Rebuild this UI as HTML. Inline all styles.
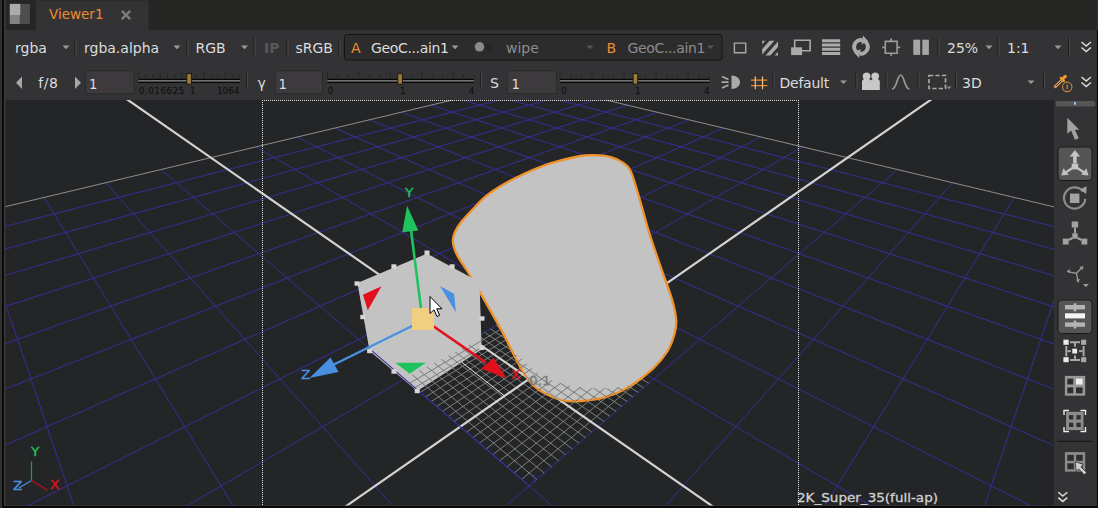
<!DOCTYPE html>
<html><head><meta charset="utf-8"><title>Viewer1</title>
<style>
html,body{margin:0;padding:0;background:#0a0a0a;}
body{width:1098px;height:508px;position:relative;overflow:hidden;font-family:"DejaVu Sans","Liberation Sans",sans-serif;}
#t span{position:absolute;white-space:pre;line-height:1;}
</style></head><body>
<svg width="1098" height="508" viewBox="0 0 1098 508" style="position:absolute;left:0;top:0">
<defs>
<clipPath id="vp"><rect x="5.5" y="100" width="1048.5" height="405.5"/></clipPath>
<clipPath id="cyl"><path d="M452.8 241.0C452.8 238.1 453.3 235.5 454.8 232.2C456.3 228.9 458.6 225.2 461.7 221.3C464.8 217.4 469.6 212.6 473.5 208.5C477.4 204.4 481.0 200.3 485.3 196.7C489.6 193.1 492.9 190.6 499.1 186.9C505.3 183.2 514.2 178.4 522.7 174.5C531.2 170.6 541.1 166.4 550.3 163.4C559.5 160.4 570.5 157.9 577.9 156.5C585.2 155.1 588.9 155.1 594.4 155.2C599.9 155.3 606.3 155.9 610.9 157.1C615.5 158.2 618.8 159.9 622.0 162.1C625.2 164.3 627.5 164.8 630.2 170.3C633.0 175.8 635.3 184.5 638.5 195.1C641.7 205.7 645.7 221.4 649.5 233.7C653.3 246.0 657.7 258.1 661.4 268.9C665.1 279.7 669.2 290.0 671.7 298.4C674.2 306.8 675.6 313.1 676.1 319.0C676.6 324.9 676.1 328.4 674.6 333.8C673.1 339.2 671.0 345.6 667.3 351.5C663.6 357.4 658.9 363.3 652.5 369.2C646.1 375.1 636.8 382.2 628.9 386.9C621.0 391.6 613.2 394.8 605.3 397.2C597.4 399.6 588.8 400.4 581.7 401.0C574.7 401.6 569.1 401.8 563.0 400.5C556.9 399.2 549.9 395.9 545.0 393.5C540.1 391.1 537.1 389.2 533.6 385.8C530.1 382.4 527.1 378.4 523.9 373.4C520.7 368.3 517.8 362.2 514.3 355.5C510.8 348.8 507.1 340.8 503.2 333.4C499.3 326.0 494.7 318.3 490.8 311.4C486.9 304.5 483.8 299.0 479.8 292.1C475.8 285.2 470.0 275.4 466.6 270.0C463.2 264.6 461.7 263.1 459.7 259.7C457.7 256.3 455.9 253.0 454.8 249.9C453.7 246.8 452.8 243.9 452.8 241.0Z"/></clipPath>
<clipPath id="band"><path d="M518.0 355.0C521.0 357.8 530.5 367.8 536.0 372.0C541.5 376.2 544.4 377.6 551.0 380.0C557.6 382.4 566.0 385.3 575.6 386.7C585.2 388.1 598.8 388.8 608.4 388.4C618.0 388.0 626.2 386.5 633.0 384.3C639.8 382.1 644.1 379.1 649.3 375.0C654.5 370.9 661.5 362.5 664.0 360.0L690 360L690 420L500 420L500 355Z"/></clipPath>
<clipPath id="cubeu"><path d="M405.5 377.5L481.7 338.6L481.7 349.5L417.2 391.0Z"/></clipPath>
<clipPath id="stripe"><rect x="762.200" y="40.800" width="15.800" height="14.600"/></clipPath>
</defs>

<rect x="0" y="0" width="1098" height="508" fill="#0a0a0a"/>
<rect x="0" y="0" width="2" height="508" fill="#303030"/>
<rect x="4" y="0" width="1092.7" height="506" fill="#3a3a3a"/>
<rect x="5.5" y="0" width="1091.2" height="30.3" fill="#262624"/>
<rect x="1096.700" y="0" width="1.300" height="30" fill="#2e2e2e"/>
<rect x="36" y="0.5" width="112.5" height="30" fill="#333335"/>
<rect x="5.5" y="30.3" width="1091.2" height="70" fill="#333335"/>
<!-- viewer icon -->
<rect x="9.8" y="3.9" width="20.1" height="20.1" fill="#4e4e4e"/>
<rect x="9.8" y="3.9" width="10.5" height="11.1" fill="#acacac"/>
<rect x="9.8" y="15" width="10" height="9" fill="#828282"/>
<!-- tab close -->
<path d="M121.800 10.800l8.400 8.400m0-8.400l-8.400 8.400" stroke="#7a7a7a" stroke-width="2.600"/>
<!-- row1 -->
<path d="M62.5 45.6h7l-3.5 3.6z" fill="#9a9a9a"/><path d="M75 38V56" stroke="#1c1c1c" stroke-width="1"/><path d="M76 38V56" stroke="#4a4a4a" stroke-width="1"/><path d="M173.5 45.6h7l-3.5 3.6z" fill="#9a9a9a"/><path d="M187 38V56" stroke="#1c1c1c" stroke-width="1"/><path d="M188 38V56" stroke="#4a4a4a" stroke-width="1"/><path d="M241 45.6h7l-3.5 3.6z" fill="#9a9a9a"/><path d="M254 38V56" stroke="#1c1c1c" stroke-width="1"/><path d="M255 38V56" stroke="#4a4a4a" stroke-width="1"/><path d="M287 38V56" stroke="#1c1c1c" stroke-width="1"/><path d="M288 38V56" stroke="#4a4a4a" stroke-width="1"/><path d="M339 38V56" stroke="#1c1c1c" stroke-width="1"/><path d="M340 38V56" stroke="#4a4a4a" stroke-width="1"/>
<rect x="344.5" y="34.5" width="377.5" height="25.5" rx="2" fill="#2c2c2c" stroke="#141414" stroke-width="1"/>
<path d="M451.5 45.6h7l-3.5 3.6z" fill="#9a9a9a"/>
<rect x="474.5" y="43.5" width="18.5" height="6.600" rx="3.300" fill="#262626"/>
<circle cx="479.5" cy="46.8" r="4.8" fill="#8a8a8a"/>
<path d="M586.5 45.6h7l-3.5 3.6z" fill="#555"/><path d="M707 45.6h7l-3.5 3.6z" fill="#555"/>
<!-- row1 icons -->
<path d="M734.400 43.100h11.300v9.600h-11.300z" fill="none" stroke="#aaaaaa" stroke-width="1.400"/>
<g clip-path="url(#stripe)"><path d="M758 56.500l16-18M764.400 59.500l16-18M751.600 53.500l16-18M770.800 62.500l16-18" stroke="#aaaaaa" stroke-width="3.600"/></g>
<path d="M794.700 40.200h15.400v10.600h-15.400z" fill="none" stroke="#aaaaaa" stroke-width="1.600"/><rect x="791.100" y="47.300" width="11" height="7.800" fill="#aaaaaa"/>
<path d="M822 40.700h18.200M822 44.950h18.200M822 49.200h18.200M822 53.450h18.200" stroke="#aaaaaa" stroke-width="3"/>
<path d="M857.600 52.700A6.800 6.800 0 0 1 862.200 40.100" fill="none" stroke="#aaaaaa" stroke-width="4"/><path d="M861.400 44.600L863 35.600L868 41.100z" fill="#aaaaaa"/>
<path d="M864.400 40.900A6.800 6.800 0 0 1 859.800 53.500" fill="none" stroke="#aaaaaa" stroke-width="4"/><path d="M860.600 49L859 58L854 52.500z" fill="#aaaaaa"/>
<path d="M885.300 41.400h11.800v11.800h-11.800z" fill="none" stroke="#9c9c9c" stroke-width="1.600"/><path d="M891.200 38.400v3M891.200 53.200v2.600M882.300 47.300h3M897.100 47.300h3" stroke="#9c9c9c" stroke-width="1.800"/>
<rect x="913.300" y="39.700" width="6.900" height="15.200" fill="#a6a6a6"/><rect x="922.300" y="39.700" width="6.600" height="15.200" fill="#a6a6a6"/>
<path d="M938 36V57" stroke="#1c1c1c" stroke-width="1"/><path d="M939 36V57" stroke="#4a4a4a" stroke-width="1"/><path d="M985.5 45.6h7l-3.5 3.6z" fill="#9a9a9a"/><path d="M998 38V56" stroke="#1c1c1c" stroke-width="1"/><path d="M999 38V56" stroke="#4a4a4a" stroke-width="1"/><path d="M1054.5 45.6h7l-3.5 3.6z" fill="#9a9a9a"/><path d="M1068.5 38V56" stroke="#1c1c1c" stroke-width="1"/><path d="M1069.5 38V56" stroke="#4a4a4a" stroke-width="1"/>
<path d="M1081.5 42l4.7 4 4.7-4M1081.5 47.5l4.7 4 4.7-4" fill="none" stroke="#dcdcdc" stroke-width="1.5"/>
<!-- row2 -->
<path d="M22 76.5v12.5l-6-6.2z" fill="#a8a8a8"/><path d="M75 76.5v12.5l6-6.2z" fill="#a8a8a8"/>
<rect x="85.5" y="70.8" width="48.5" height="23" rx="1.5" fill="#3c3a3c" stroke="#2a2a2a" stroke-width="1"/><path d="M138.5 79.3H240M138.5 82.3H240" stroke="#080808" stroke-width="1.2"/><path d="M138.5 80.8H240" stroke="#707070" stroke-width="1.4"/><path d="M138.5 72V78M145.8 74.5V78M153.0 74.5V78M160.2 72V78M167.5 74.5V78M174.8 74.5V78M182.0 72V78M189.2 74.5V78M196.5 74.5V78M203.8 72V78M211.0 74.5V78M218.2 74.5V78M225.5 72V78M232.8 74.5V78M240.0 74.5V78" stroke="#262626" stroke-width="1"/><rect x="186.8" y="73.6" width="4.6" height="10.6" fill="#9c7c3a" stroke="#1e1a0e" stroke-width="1"/><path d="M246.5 72.5V89" stroke="#1c1c1c" stroke-width="1"/><path d="M247.5 72.5V89" stroke="#4a4a4a" stroke-width="1"/>
<rect x="275.0" y="70.8" width="47.5" height="23" rx="1.5" fill="#3c3a3c" stroke="#2a2a2a" stroke-width="1"/><path d="M327.5 79.3H474M327.5 82.3H474" stroke="#080808" stroke-width="1.2"/><path d="M327.5 80.8H474" stroke="#707070" stroke-width="1.4"/><path d="M327.5 72V78M338.0 74.5V78M348.4 74.5V78M358.9 72V78M369.4 74.5V78M379.8 74.5V78M390.3 72V78M400.8 74.5V78M411.2 74.5V78M421.7 72V78M432.1 74.5V78M442.6 74.5V78M453.1 72V78M463.5 74.5V78M474.0 74.5V78" stroke="#262626" stroke-width="1"/><rect x="397.8" y="73.6" width="4.6" height="10.6" fill="#9c7c3a" stroke="#1e1a0e" stroke-width="1"/><path d="M480.5 72.5V89" stroke="#1c1c1c" stroke-width="1"/><path d="M481.5 72.5V89" stroke="#4a4a4a" stroke-width="1"/>
<rect x="507.5" y="70.8" width="49.0" height="23" rx="1.5" fill="#3c3a3c" stroke="#2a2a2a" stroke-width="1"/><path d="M560 79.3H709.5M560 82.3H709.5" stroke="#080808" stroke-width="1.2"/><path d="M560 80.8H709.5" stroke="#707070" stroke-width="1.4"/><path d="M560.0 72V78M570.7 74.5V78M581.4 74.5V78M592.0 72V78M602.7 74.5V78M613.4 74.5V78M624.1 72V78M634.8 74.5V78M645.4 74.5V78M656.1 72V78M666.8 74.5V78M677.5 74.5V78M688.1 72V78M698.8 74.5V78M709.5 74.5V78" stroke="#262626" stroke-width="1"/><rect x="633.0999999999999" y="73.6" width="4.6" height="10.6" fill="#9c7c3a" stroke="#1e1a0e" stroke-width="1"/>
<!-- headlamp -->
<path d="M731.5 75.5c5 0 8.5 3 8.500 6.700s-3.500 6.700-8.500 6.700z" fill="#aaaaaa"/><path d="M722 76.500l6.500 3M721.500 82.200h7M722 88l6.500-3" stroke="#aaaaaa" stroke-width="1.7"/>
<!-- grid # orange -->
<path d="M751 80.200h16.300M751 85.600h16.300" stroke="#e88a30" stroke-width="1.300"/><path d="M755.300 76.500v12.700M762.500 76.500v12.700" stroke="#f2c088" stroke-width="1.200"/>
<path d="M773 72.5V89" stroke="#1c1c1c" stroke-width="1"/><path d="M774 72.5V89" stroke="#4a4a4a" stroke-width="1"/><path d="M840 80.5h7l-3.5 3.6z" fill="#9a9a9a"/><path d="M856 72.5V89" stroke="#1c1c1c" stroke-width="1"/><path d="M857 72.5V89" stroke="#4a4a4a" stroke-width="1"/>
<!-- camera people icon -->
<path d="M862 90v-8.500c0-1 .8-2 2-2.300a3.900 3.900 0 1 1 5.200 0c.700.200 1.300.700 1.700 1.300.400-.600 1-1.100 1.700-1.300a3.900 3.900 0 1 1 5.200 0c1.200.300 2 1.300 2 2.300v8.500z" fill="#c8c8c8"/>
<path d="M886 72.5V89" stroke="#1c1c1c" stroke-width="1"/><path d="M887 72.5V89" stroke="#4a4a4a" stroke-width="1"/>
<path d="M892 89c5 0 5-14 8.700-14s3.700 14 8.700 14" fill="none" stroke="#9a9a9a" stroke-width="1.7"/>
<path d="M918 72.5V89" stroke="#1c1c1c" stroke-width="1"/><path d="M919 72.5V89" stroke="#4a4a4a" stroke-width="1"/>
<path d="M929 75.500h16.500v13h-16.500z" fill="none" stroke="#aaaaaa" stroke-width="1.700" stroke-dasharray="4.200 2.200"/><path d="M946.500 86.500h5l-2.500 2.800z" fill="#8a8a8a"/>
<path d="M955.5 72.5V89" stroke="#1c1c1c" stroke-width="1"/><path d="M956.5 72.5V89" stroke="#4a4a4a" stroke-width="1"/><path d="M1027.5 80.5h7l-3.5 3.6z" fill="#9a9a9a"/><path d="M1043.5 72.5V89" stroke="#1c1c1c" stroke-width="1"/><path d="M1044.5 72.5V89" stroke="#4a4a4a" stroke-width="1"/>
<!-- pipette -->
<path d="M1055.300 86.600l7.200-7" stroke="#dca060" stroke-width="2.900" stroke-linecap="round"/><path d="M1055.600 86.300l6.600-6.400" stroke="#3a3028" stroke-width="1"/>
<path d="M1062.300 79.300l3-2.900" stroke="#f29a2e" stroke-width="3.100" stroke-linecap="round"/><path d="M1060.200 77.300l4.400 4.500" stroke="#f29a2e" stroke-width="2.200"/>
<circle cx="1067.200" cy="86.900" r="4.700" fill="#343434" stroke="#c8823a" stroke-width="1.200"/><path d="M1067.200 84.500v4.800" stroke="#c8823a" stroke-width="1.300"/>
<path d="M1081.500 77l4.700 4 4.700-4M1081.500 82.500l4.700 4 4.700-4" fill="none" stroke="#dcdcdc" stroke-width="1.500"/>


<rect x="5.5" y="100" width="1048.5" height="405.5" fill="#242527"/>
<g clip-path="url(#vp)" fill="none">
<path d="M9011.4 7470.4L1609.4 339.4M-7953.0 7470.4L-551.0 339.4M6935.1 7470.4L1470.4 306.2M-5876.7 7470.4L-412.0 306.2M4858.8 7470.4L1352.0 278.0M-3800.4 7470.4L-293.7 278.0M2782.5 7470.4L1250.1 253.6M-1724.1 7470.4L-191.7 253.6M706.1 7470.4L1161.3 232.5M352.2 7470.4L-102.9 232.5M-1370.2 7470.4L1083.3 213.9M2428.6 7470.4L-24.9 213.9M-3446.5 7470.4L1014.3 197.4M4504.9 7470.4L44.1 197.4M-5522.8 7470.4L952.7 182.7M6581.2 7470.4L105.7 182.7M-7599.1 7470.4L897.4 169.5M8657.5 7470.4L160.9 169.5M-4388.5 3175.0L802.4 146.8M5446.9 3175.0L256.0 146.8M-2652.1 1852.7L761.2 137.0M3710.5 1852.7L297.2 137.0M-1920.3 1295.5L723.6 128.0M2978.6 1295.5L334.8 128.0M-1516.8 988.3L689.0 119.8M2575.2 988.3L369.4 119.8M-1261.3 793.6L657.1 112.2M2319.6 793.6L401.3 112.2M-1084.8 659.3L627.7 105.1M2143.2 659.3L430.7 105.1M-955.7 561.0L600.4 98.6M2014.1 561.0L458.0 98.6M-857.2 485.9L575.0 92.6M1915.6 485.9L483.4 92.6M-779.5 426.8L551.3 86.9M1837.8 426.8L507.1 86.9" stroke="#372e98" stroke-width="1"/>
<path d="M11087.7 7470.4L1775.0 378.9M-10029.4 7470.4L-716.6 378.9M-716.6 378.9L529.2 81.7M1775.0 378.9L529.2 81.7" stroke="#8e8e8e" stroke-width="1"/>
<path d="M521.6 479.4L646.4 374.6M536.8 479.4L412.0 374.6M514.1 473.0L639.2 370.4M544.2 473.0L419.2 370.4M506.9 466.8L632.1 366.3M551.5 466.8L426.3 366.3M499.8 460.7L625.2 362.2M558.6 460.7L433.2 362.2M492.8 454.7L618.4 358.2M565.6 454.7L440.0 358.2M486.0 448.9L611.7 354.3M572.3 448.9L446.7 354.3M479.4 443.2L605.1 350.5M579.0 443.2L453.3 350.5M472.9 437.6L598.6 346.7M585.5 437.6L459.8 346.7M466.5 432.1L592.3 343.0M591.8 432.1L466.1 343.0M454.2 421.5L579.9 335.8M604.2 421.5L478.5 335.8M448.3 416.4L573.9 332.3M610.1 416.4L484.5 332.3M442.4 411.4L568.0 328.8M616.0 411.4L490.4 328.8M436.7 406.4L562.2 325.4M621.7 406.4L496.2 325.4M431.1 401.6L556.4 322.1M627.3 401.6L502.0 322.1M425.6 396.9L550.8 318.8M632.8 396.9L507.6 318.8M420.2 392.3L545.3 315.6M638.2 392.3L513.1 315.6M414.9 387.7L539.8 312.4M643.5 387.7L518.6 312.4M409.7 383.3L534.5 309.3M648.7 383.3L523.9 309.3" stroke="#8c8c8c" stroke-width="0.85"/>
<path d="M-9675.5 7470.4L1148.2 -51.3M10733.8 7470.4L-89.8 -51.3" stroke="#d2d2d2" stroke-width="2.2"/>
<path d="M262.5 100V506M798.5 100V506M262 100.5H799" stroke="#e0e0e0" stroke-width="1" stroke-dasharray="1 1" shape-rendering="crispEdges"/>
<path d="M461.9 362.4L504.2 395.6" stroke="#e6e6e6" stroke-width="1"/>
<path d="M452.8 241.0C452.8 238.1 453.3 235.5 454.8 232.2C456.3 228.9 458.6 225.2 461.7 221.3C464.8 217.4 469.6 212.6 473.5 208.5C477.4 204.4 481.0 200.3 485.3 196.7C489.6 193.1 492.9 190.6 499.1 186.9C505.3 183.2 514.2 178.4 522.7 174.5C531.2 170.6 541.1 166.4 550.3 163.4C559.5 160.4 570.5 157.9 577.9 156.5C585.2 155.1 588.9 155.1 594.4 155.2C599.9 155.3 606.3 155.9 610.9 157.1C615.5 158.2 618.8 159.9 622.0 162.1C625.2 164.3 627.5 164.8 630.2 170.3C633.0 175.8 635.3 184.5 638.5 195.1C641.7 205.7 645.7 221.4 649.5 233.7C653.3 246.0 657.7 258.1 661.4 268.9C665.1 279.7 669.2 290.0 671.7 298.4C674.2 306.8 675.6 313.1 676.1 319.0C676.6 324.9 676.1 328.4 674.6 333.8C673.1 339.2 671.0 345.6 667.3 351.5C663.6 357.4 658.9 363.3 652.5 369.2C646.1 375.1 636.8 382.2 628.9 386.9C621.0 391.6 613.2 394.8 605.3 397.2C597.4 399.6 588.8 400.4 581.7 401.0C574.7 401.6 569.1 401.8 563.0 400.5C556.9 399.2 549.9 395.9 545.0 393.5C540.1 391.1 537.1 389.2 533.6 385.8C530.1 382.4 527.1 378.4 523.9 373.4C520.7 368.3 517.8 362.2 514.3 355.5C510.8 348.8 507.1 340.8 503.2 333.4C499.3 326.0 494.7 318.3 490.8 311.4C486.9 304.5 483.8 299.0 479.8 292.1C475.8 285.2 470.0 275.4 466.6 270.0C463.2 264.6 461.7 263.1 459.7 259.7C457.7 256.3 455.9 253.0 454.8 249.9C453.7 246.8 452.8 243.9 452.8 241.0Z" fill="#c3c3c3" stroke="#f0922a" stroke-width="2.3"/>
<g clip-path="url(#cyl)"><g clip-path="url(#band)">
<path d="M521.6 479.4L646.4 374.6M536.8 479.4L412.0 374.6M514.1 473.0L639.2 370.4M544.2 473.0L419.2 370.4M506.9 466.8L632.1 366.3M551.5 466.8L426.3 366.3M499.8 460.7L625.2 362.2M558.6 460.7L433.2 362.2M492.8 454.7L618.4 358.2M565.6 454.7L440.0 358.2M486.0 448.9L611.7 354.3M572.3 448.9L446.7 354.3M479.4 443.2L605.1 350.5M579.0 443.2L453.3 350.5M472.9 437.6L598.6 346.7M585.5 437.6L459.8 346.7M466.5 432.1L592.3 343.0M591.8 432.1L466.1 343.0M454.2 421.5L579.9 335.8M604.2 421.5L478.5 335.8M448.3 416.4L573.9 332.3M610.1 416.4L484.5 332.3M442.4 411.4L568.0 328.8M616.0 411.4L490.4 328.8M436.7 406.4L562.2 325.4M621.7 406.4L496.2 325.4M431.1 401.6L556.4 322.1M627.3 401.6L502.0 322.1M425.6 396.9L550.8 318.8M632.8 396.9L507.6 318.8M420.2 392.3L545.3 315.6M638.2 392.3L513.1 315.6M414.9 387.7L539.8 312.4M643.5 387.7L518.6 312.4M409.7 383.3L534.5 309.3M648.7 383.3L523.9 309.3" stroke="#6e6e6e" stroke-width="0.9"/>
<path d="M-9675.5 7470.4L1148.2 -51.3M10733.8 7470.4L-89.8 -51.3" stroke="#9a9a9a" stroke-width="1.6"/>
</g></g>
<path d="M427.0 253.6L479.5 282.0L481.7 349.5L417.2 391.0L369.6 350.9L357.4 282.9Z" fill="#c3c3c3"/>
<g clip-path="url(#cubeu)">
<path d="M521.6 479.4L646.4 374.6M536.8 479.4L412.0 374.6M514.1 473.0L639.2 370.4M544.2 473.0L419.2 370.4M506.9 466.8L632.1 366.3M551.5 466.8L426.3 366.3M499.8 460.7L625.2 362.2M558.6 460.7L433.2 362.2M492.8 454.7L618.4 358.2M565.6 454.7L440.0 358.2M486.0 448.9L611.7 354.3M572.3 448.9L446.7 354.3M479.4 443.2L605.1 350.5M579.0 443.2L453.3 350.5M472.9 437.6L598.6 346.7M585.5 437.6L459.8 346.7M466.5 432.1L592.3 343.0M591.8 432.1L466.1 343.0M454.2 421.5L579.9 335.8M604.2 421.5L478.5 335.8M448.3 416.4L573.9 332.3M610.1 416.4L484.5 332.3M442.4 411.4L568.0 328.8M616.0 411.4L490.4 328.8M436.7 406.4L562.2 325.4M621.7 406.4L496.2 325.4M431.1 401.6L556.4 322.1M627.3 401.6L502.0 322.1M425.6 396.9L550.8 318.8M632.8 396.9L507.6 318.8M420.2 392.3L545.3 315.6M638.2 392.3L513.1 315.6M414.9 387.7L539.8 312.4M643.5 387.7L518.6 312.4M409.7 383.3L534.5 309.3M648.7 383.3L523.9 309.3" stroke="#747474" stroke-width="0.9"/>
</g>
<path d="M369.4 348.6L529.2 485.9" stroke="#3a2f9e" stroke-width="1.1"/>
<rect x="424.5" y="250.5" width="5" height="4.4" fill="#d6d6d6"/><rect x="391.4" y="264.3" width="5" height="4.4" fill="#d6d6d6"/><rect x="449.6" y="264.3" width="5" height="4.4" fill="#d6d6d6"/><rect x="354.5" y="281.3" width="5" height="4.4" fill="#d6d6d6"/><rect x="479.5" y="316.3" width="5" height="4.4" fill="#d6d6d6"/><rect x="360.3" y="314.8" width="5" height="4.4" fill="#d6d6d6"/><rect x="367.1" y="348.8" width="5" height="4.4" fill="#d6d6d6"/><rect x="391.5" y="369.3" width="5" height="4.4" fill="#d6d6d6"/><rect x="414.7" y="388.8" width="5" height="4.4" fill="#d6d6d6"/><rect x="479.5" y="345.6" width="5" height="4.4" fill="#d6d6d6"/>
<!-- gizmo -->
<path d="M421.200 310L411 230" stroke="#1fc35e" stroke-width="2.600"/>
<path d="M407.1 205.8L402.3 232.2L418.3 230.4Z" fill="#1fc35e"/>
<path d="M414 325L334 364.5" stroke="#4a90e0" stroke-width="2.4"/>
<path d="M309.5 377.9L330.5 357.5L338.5 372Z" fill="#4a90e0"/>
<path d="M433 326L486 362.600" stroke="#e0101c" stroke-width="2.500"/>
<path d="M506.600 378.500L481.300 368.700L493.600 357.800Z" fill="#e0101c"/>
<rect x="412" y="308" width="22" height="22" fill="#f0d080"/>
<path d="M362.900 294.800L381.500 286.200L367.800 310.200Z" fill="#e0101c"/>
<path d="M440 286L454.200 294L455.800 312.200Z" fill="#4a90e0"/>
<path d="M395.4 362.8L426 362.8L409.6 373.8Z" fill="#1fc35e"/>
<!-- cursor -->
<path d="M430 296.5V313.5L434 309.8L437 316.5L439.6 315.3L436.7 308.8H442Z" fill="#fff" stroke="#000" stroke-width="1"/>
<!-- axis indicator -->
<path d="M31.5 480.6V461.5" stroke="#17a04a" stroke-width="1.2"/>
<path d="M31.5 480.6L18.4 488.3" stroke="#4a90e0" stroke-width="1.2"/>
<path d="M31.5 480.6L47.6 490.2" stroke="#c01018" stroke-width="1.2"/>
</g>


<rect x="1054" y="100" width="42.7" height="406" fill="#333335"/>
<rect x="1055.500" y="101" width="40" height="5.400" rx="2.700" fill="#565656"/><rect x="1074" y="101.800" width="1.800" height="3" fill="#9cc4f0"/>
<path d="M1067.300 117.800v16l3.800-3.400 3.800 9.300 3.800-1.500-3.800-8.500h4.400z" fill="#a2a2a2"/>
<rect x="1058" y="147" width="34" height="33.500" rx="3.500" fill="#555" stroke="#1a1a1a" stroke-width="1"/>
<path d="M1074.900 150l5.200 6.600h-3.400v7h-3.600v-7h-3.400z" fill="#c4c4c4"/><rect x="1071.700" y="163.600" width="6.500" height="5.800" fill="#c4c4c4"/>
<path d="M1072.500 168l-6.500 4.300" stroke="#c0c0c0" stroke-width="2.400"/><path d="M1061.300 175.500l2.100-7.200 5.300 6.500z" fill="#c0c0c0"/>
<path d="M1077.300 168l6.500 4.300" stroke="#c0c0c0" stroke-width="2.400"/><path d="M1088.500 175.500l-2.100-7.200-5.300 6.500z" fill="#c0c0c0"/>
<path d="M1082.800 191.300a10.600 10.600 0 1 0 2.400 7.500" fill="none" stroke="#8e8e8e" stroke-width="2.200"/><path d="M1079.800 189.500l6.800-3.300-.5 7.800z" fill="#a0a0a0"/>
<rect x="1070" y="193.600" width="9.400" height="9.400" fill="#a2a2a2"/>
<rect x="1071.700" y="221.500" width="6.500" height="6" fill="#a2a2a2"/><rect x="1074" y="227.500" width="2" height="6" fill="#a2a2a2"/><rect x="1072.300" y="233.300" width="5.400" height="5.400" fill="#a2a2a2"/>
<rect x="1062.800" y="238.600" width="5.800" height="5.900" fill="#a2a2a2"/><rect x="1081.500" y="238.600" width="5.800" height="5.900" fill="#a2a2a2"/>
<path d="M1072.500 238l-4 2M1077.500 238l4 2" stroke="#a2a2a2" stroke-width="2"/>
<path d="M1076.400 273.300l5-5M1076.400 273.300l-7.500-1.500M1076.400 273.300l1.500 7" stroke="#9a9a9a" stroke-width="1.300" fill="none"/>
<path d="M1083.500 266l-4 1 3 3zM1066.500 271.300l3.500-2.200-.6 4.200zM1078.400 283l-2.500-3.200 4-.8z" fill="#9a9a9a"/><path d="M1082.900 284h6l-3 3.200z" fill="#9a9a9a"/>
<rect x="1058" y="300" width="34" height="33.500" rx="3.500" fill="#555" stroke="#1a1a1a" stroke-width="1"/>
<rect x="1065" y="305" width="20" height="4.400" fill="#b4b4b4"/><rect x="1073.700" y="303.300" width="2.600" height="8" fill="#b4b4b4"/>
<rect x="1065" y="313.300" width="20" height="5.100" fill="#f4f4f4"/>
<rect x="1065" y="322.400" width="20" height="4.400" fill="#b4b4b4"/><rect x="1073.700" y="320.500" width="2.600" height="8" fill="#b4b4b4"/>
<g fill="#a8a8a8"><rect x="1070" y="341.200" width="10" height="2"/><rect x="1074" y="343" width="2" height="3.600"/><rect x="1070" y="359" width="10" height="2"/><rect x="1074" y="355.400" width="2" height="3.600"/>
<rect x="1065.300" y="346" width="2" height="10.300"/><rect x="1067.300" y="350.100" width="3.600" height="2"/><rect x="1082.600" y="346" width="2" height="10.300"/><rect x="1079" y="350.100" width="3.600" height="2"/>
<rect x="1081.100" y="339.700" width="5.100" height="5.100"/><rect x="1081.100" y="357.200" width="5.100" height="5"/></g>
<g fill="#ececec"><rect x="1063.400" y="339.700" width="5.300" height="5.100"/><rect x="1063.400" y="357.200" width="5.300" height="5"/><rect x="1072.300" y="348.700" width="4.800" height="4.800"/></g>
<rect x="1064.900" y="375.900" width="20.300" height="19.800" fill="#989898"/><rect x="1067.300" y="378.600" width="5.900" height="5.900" fill="#2c2c2c"/><rect x="1076" y="378.600" width="6.600" height="5.900" fill="#f0f0f0"/><rect x="1067.300" y="387.400" width="5.900" height="5.900" fill="#2c2c2c"/><rect x="1076" y="387.400" width="6.600" height="5.900" fill="#2c2c2c"/>
<path d="M1064 415v-4.500h5M1080.500 410.500h5v4.500M1085.500 427v4.500h-5M1069 431.500h-5v-4.500" fill="none" stroke="#ececec" stroke-width="1.400"/>
<rect x="1066.100" y="411.800" width="17.400" height="18.300" fill="#8c8c8c"/><g fill="#2e2e2e"><rect x="1069" y="415.100" width="4.300" height="4.400"/><rect x="1076.400" y="415.100" width="4.300" height="4.400"/><rect x="1069" y="422.700" width="4.300" height="4.300"/><rect x="1076.400" y="422.700" width="4.300" height="4.300"/></g>
<path d="M1057 441.300h35.500" stroke="#141414" stroke-width="1"/>
<rect x="1064.900" y="452.100" width="20.300" height="19.500" fill="#8c8c8c"/><g fill="#2e2e2e"><rect x="1067.300" y="454.800" width="6.500" height="6"/><rect x="1076.200" y="454.800" width="6.500" height="6"/><rect x="1067.300" y="463.300" width="6.500" height="6"/><rect x="1076.200" y="463.300" width="6.500" height="6"/></g>
<path d="M1075.200 461.800l1 9.500 2.600-2.300 5.500 5.800 2.300-2.300-5.700-5.500 2.500-2.600z" fill="#d0d0d0" stroke="#323232" stroke-width=".8"/>
<path d="M1058.300 492.300l4.500 3.800 4.500-3.800M1058.300 497.600l4.500 3.800 4.500-3.800" fill="none" stroke="#dcdcdc" stroke-width="1.500"/>

</svg>
<div id="t">
<span style="left:49px;top:8.18px;font-size:13.5px;color:#f08a32;">Viewer1</span>
<span style="left:15px;top:40.66px;font-size:14px;color:#dcdcdc;">rgba</span>
<span style="left:84px;top:40.66px;font-size:14px;color:#dcdcdc;">rgba.alpha</span>
<span style="left:195.5px;top:40.66px;font-size:14px;color:#dcdcdc;">RGB</span>
<span style="left:264px;top:40.66px;font-size:14px;color:#585858;font-weight:bold;">IP</span>
<span style="left:295.5px;top:40.66px;font-size:14px;color:#dcdcdc;">sRGB</span>
<span style="left:351px;top:40.66px;font-size:14px;color:#ee8a2e;">A</span>
<span style="left:371px;top:40.66px;font-size:14px;color:#dcdcdc;letter-spacing:-0.35px;">GeoC...ain1</span>
<span style="left:506px;top:40.66px;font-size:14px;color:#8c8c8c;">wipe</span>
<span style="left:606.5px;top:40.66px;font-size:14px;color:#ee8a2e;">B</span>
<span style="left:627.5px;top:40.66px;font-size:14px;color:#8c8c8c;letter-spacing:-0.35px;">GeoC...ain1</span>
<span style="left:947px;top:40.66px;font-size:14px;color:#dcdcdc;">25%</span>
<span style="left:1007px;top:40.66px;font-size:14px;color:#dcdcdc;">1:1</span>
<span style="left:38.3px;top:76.06px;font-size:14px;color:#dcdcdc;letter-spacing:0.5px;">f/8</span>
<span style="left:89px;top:77.83px;font-size:13.2px;color:#dcdcdc;">1</span>
<span style="left:257.5px;top:75.86px;font-size:14px;color:#dcdcdc;">γ</span>
<span style="left:278.5px;top:77.83px;font-size:13.2px;color:#dcdcdc;">1</span>
<span style="left:490px;top:75.86px;font-size:14px;color:#dcdcdc;">S</span>
<span style="left:511.5px;top:77.83px;font-size:13.2px;color:#dcdcdc;">1</span>
<span style="left:779.5px;top:75.86px;font-size:14px;color:#dcdcdc;letter-spacing:-0.25px;">Default</span>
<span style="left:962px;top:75.86px;font-size:14px;color:#dcdcdc;">3D</span>
<span style="left:139px;top:86.86px;font-size:8.8px;color:#0c0c0c;letter-spacing:0.45px;">0.016625</span>
<span style="left:190px;top:86.86px;font-size:8.8px;color:#0c0c0c;">1</span>
<span style="left:217px;top:86.86px;font-size:8.8px;color:#0c0c0c;">1064</span>
<span style="left:327.8px;top:86.86px;font-size:8.8px;color:#0c0c0c;">0</span>
<span style="left:400px;top:86.86px;font-size:8.8px;color:#0c0c0c;">1</span>
<span style="left:468.8px;top:86.86px;font-size:8.8px;color:#0c0c0c;">4</span>
<span style="left:561px;top:86.86px;font-size:8.8px;color:#0c0c0c;">0</span>
<span style="left:635px;top:86.86px;font-size:8.8px;color:#0c0c0c;">1</span>
<span style="left:704px;top:86.86px;font-size:8.8px;color:#0c0c0c;">4</span>
<span style="left:405px;top:187.12px;font-size:12.5px;color:#1fc35e;transform:scaleX(1.1);transform-origin:0 0;-webkit-text-stroke:0.3px;">Y</span>
<span style="left:511px;top:369.03px;font-size:12.5px;color:#e0101c;transform:scaleX(1.1);transform-origin:0 0;-webkit-text-stroke:0.3px;">X</span>
<span style="left:301.3px;top:369.03px;font-size:12.5px;color:#4a90e0;transform:scaleX(1.1);transform-origin:0 0;-webkit-text-stroke:0.3px;">Z</span>
<span style="left:529.3px;top:374.73px;font-size:12.5px;color:#7b7b7b;transform:scaleX(1.1);transform-origin:0 0;-webkit-text-stroke:0.3px;">0.1</span>
<span style="left:532px;top:476.23px;font-size:8px;color:#3a2f9e;">1</span>
<span style="left:31.3px;top:446.43px;font-size:12.5px;color:#1fc35e;transform:scaleX(1.1);transform-origin:0 0;-webkit-text-stroke:0.3px;">Y</span>
<span style="left:49.8px;top:478.93px;font-size:12.5px;color:#e0101c;transform:scaleX(1.1);transform-origin:0 0;-webkit-text-stroke:0.3px;">X</span>
<span style="left:12.8px;top:479.93px;font-size:12.5px;color:#4a90e0;transform:scaleX(1.1);transform-origin:0 0;-webkit-text-stroke:0.3px;">Z</span>
<span style="left:797.3px;top:492.49px;font-size:12.3px;color:#d0d0d0;transform:scaleX(1.1);transform-origin:0 0;-webkit-text-stroke:0.3px;">2K_Super_35(full-ap)</span>
</div>
</body></html>
